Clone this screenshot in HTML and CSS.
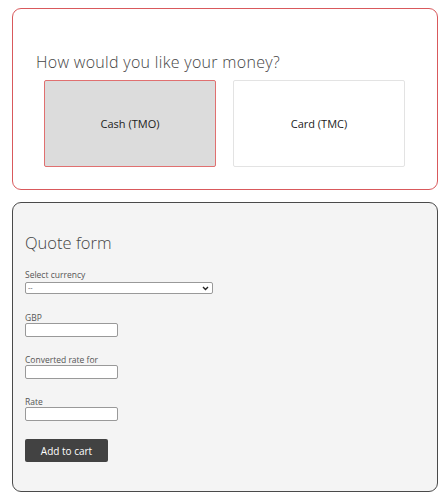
FILE: index.html
```html
<!DOCTYPE html>
<html>
<head>
<meta charset="utf-8">
<link rel="stylesheet" href="styles.css">
</head>
<body>
<section class="card choice">
  <h2 class="choice-title">How would you like your money?</h2>
  <div class="options">
    <div class="option selected">Cash (TMO)</div>
    <div class="option">Card (TMC)</div>
  </div>
</section>
<section class="card quote">
  <h2 class="quote-title">Quote form</h2>
  <div class="field field-select">
    <label class="label">Select currency</label>
    <div class="select-wrap">
      <select class="select"><option>--</option></select>
      <svg class="chevron" width="7" height="5" viewBox="0 0 7 5"><path d="M1 1l2.5 2.5L6 1" fill="none" stroke="#222" stroke-width="1.4"/></svg>
    </div>
  </div>
  <div class="field">
    <label class="label">GBP</label>
    <input class="input" type="text">
  </div>
  <div class="field">
    <label class="label">Converted rate for</label>
    <input class="input" type="text">
  </div>
  <div class="field">
    <label class="label">Rate</label>
    <input class="input" type="text">
  </div>
  <button class="btn">Add to cart</button>
</section>
</body>
</html>
```
FILE: styles.css
```css
html, body { margin: 0; padding: 0; background: #fff; }
body {
  padding: 8px 1px 0 12px;
  font-family: "Open Sans", "Liberation Sans", sans-serif;
  color: #333;
}
.card {
  box-sizing: border-box;
  width: 426px;
  border-radius: 9px;
}
.choice {
  height: 182px;
  border: 1.5px solid #d9595c;
  padding: 42px 0 0 23px;
}
.choice-title {
  margin: 0;
  font-weight: 300;
  font-size: 16px;
  line-height: 22px;
  color: #444;
  letter-spacing: 0.3px;
}
.options {
  display: flex;
  gap: 17px;
  margin: 7px 0 0 8px;
}
.option {
  box-sizing: border-box;
  width: 172px;
  height: 87px;
  display: flex;
  align-items: center;
  justify-content: center;
  border: 1px solid #e3e3e3;
  border-radius: 2px;
  background: #fff;
  font-size: 11px;
  color: #222;
}
.option.selected {
  background: #dcdcdc;
  border-color: #e07070;
}
.quote {
  margin-top: 12px;
  height: 290px;
  border: 1.5px solid #4a4a4a;
  background: #f4f4f4;
  padding: 28px 0 0 12px;
}
.quote-title {
  margin: 0 0 15px;
  font-weight: 300;
  font-size: 16.5px;
  line-height: 24px;
  color: #444;
}
.field {
  display: flex;
  flex-direction: column;
  align-items: flex-start;
  margin-bottom: 18px;
}
.field-select { margin-bottom: 19px; }
.label {
  font-size: 8.5px;
  line-height: 10px;
  color: #555;
}
.select-wrap {
  position: relative;
  margin-top: 2px;
  display: flex;
}
.select {
  box-sizing: border-box;
  width: 188px;
  height: 12px;
  font-size: 7px;
  line-height: 10px;
  padding: 0 2px;
  border: 1px solid #999;
  border-radius: 2px;
  background: #fff;
  color: #666;
  appearance: none;
  -webkit-appearance: none;
}
.chevron {
  position: absolute;
  right: 4px;
  top: 4px;
}
.input {
  box-sizing: border-box;
  width: 93px;
  height: 14px;
  border: 1px solid #999;
  border-radius: 2px;
  background: #fff;
  padding: 0;
}
.btn {
  display: block;
  margin: 0;
  width: 83px;
  height: 23px;
  border: none;
  border-radius: 2px;
  background: #424242;
  color: #fff;
  font-family: "Open Sans", "Liberation Sans", sans-serif;
  font-size: 10px;
}
```
